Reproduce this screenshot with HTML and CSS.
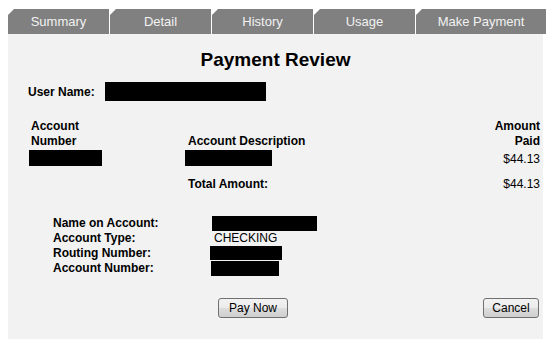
FILE: index.html
```html
<!DOCTYPE html>
<html lang="en">
<head>
    <meta charset="UTF-8">
    <title>Payment Review</title>
    <link rel="stylesheet" href="styles.css">
</head>
<body>
    <div class="page">
        <div class="tabs">
            <div class="tab">Summary</div>
            <div class="tab">Detail</div>
            <div class="tab">History</div>
            <div class="tab">Usage</div>
            <div class="tab tab-wide">Make Payment</div>
        </div>

        <div class="panel">
            <h1 class="title">Payment Review</h1>

            <div class="user-row">
                <span class="label">User Name:</span>
                <span class="redact redact-user"></span>
            </div>

            <div class="accounts">
                <div class="col-num label">Account<br>Number</div>
                <div class="col-desc label head-desc">Account Description</div>
                <div class="col-amt label">Amount<br>Paid</div>

                <div class="col-num"><span class="redact redact-num"></span></div>
                <div class="col-desc"><span class="redact redact-desc"></span></div>
                <div class="col-amt amt-cell">$44.13</div>

                <div class="col-num"></div>
                <div class="col-desc label total">Total Amount:</div>
                <div class="col-amt total">$44.13</div>
            </div>

            <div class="details">
                <span class="label">Name on Account:</span>
                <span><span class="redact redact-name"></span></span>
                <span class="label">Account Type:</span>
                <span class="value-type">CHECKING</span>
                <span class="label">Routing Number:</span>
                <span><span class="redact redact-routing"></span></span>
                <span class="label">Account Number:</span>
                <span><span class="redact redact-acct"></span></span>
            </div>

            <div class="actions">
                <button class="btn btn-pay">Pay Now</button>
                <button class="btn btn-cancel">Cancel</button>
            </div>
        </div>
    </div>
</body>
</html>
```

FILE: styles.css
```css
body {
    margin: 0;
    background: #fff;
    font-family: "Liberation Sans", Arial, sans-serif;
    font-size: 12px;
    color: #000;
}
.page {
    padding: 9px 0 0 8px;
}
.tabs {
    display: flex;
    gap: 1px;
    height: 25px;
}
.tab {
    width: 101px;
    box-sizing: border-box;
    padding-top: 1px;
    background: #808080;
    color: #f2f2f2;
    font-size: 13px;
    line-height: 24px;
    text-align: center;
    clip-path: polygon(6px 0, 100% 0, 100% 100%, 0 100%, 0 6px);
}
.tab-wide {
    width: 130px;
}
.panel {
    width: 535px;
    height: 305px;
    background: #f2f2f2;
    box-sizing: border-box;
    padding-top: 15px;
}
.title {
    margin: 0;
    font-size: 19px;
    line-height: 22px;
    text-align: center;
}
.label {
    font-weight: bold;
}
.redact {
    display: inline-block;
    background: #000;
    vertical-align: top;
}
.user-row {
    display: flex;
    align-items: center;
    gap: 10px;
    margin: 11px 0 0 20px;
}
.redact-user {
    width: 161px;
    height: 19px;
}
.accounts {
    display: grid;
    grid-template-columns: 156px 1fr auto;
    margin-top: 18px;
    padding: 0 3px 0 21px;
    line-height: 15px;
}
.col-num {
    padding-left: 2px;
}
.head-desc {
    align-self: end;
    padding-left: 3px;
}
.col-amt {
    text-align: right;
}
.redact-num {
    width: 73px;
    height: 16px;
    margin: 1px 0 0 -2px;
}
.redact-desc {
    width: 87px;
    height: 16px;
    margin-top: 1px;
}
.amt-cell {
    padding-top: 3px;
}
.total {
    margin-top: 10px;
}
.total.label {
    padding-left: 3px;
}
.details {
    display: grid;
    grid-template-columns: 159px auto;
    margin: 24px 0 0 45px;
    line-height: 15px;
}
.redact-name {
    width: 105px;
    height: 15px;
}
.redact-routing {
    width: 72px;
    height: 14px;
    margin-left: -2px;
}
.redact-acct {
    width: 68px;
    height: 15px;
    margin-left: -1px;
}
.value-type {
    padding-left: 2px;
}
.actions {
    display: flex;
    margin-top: 22px;
    padding: 0 4px 0 210px;
    justify-content: space-between;
}
.btn {
    height: 20px;
    padding: 0;
    border: 1px solid #707070;
    border-radius: 3px;
    background: linear-gradient(#f2f2f2, #ebebeb 50%, #dddddd 50%, #cfcfcf);
    font-family: "Liberation Sans", Arial, sans-serif;
    font-size: 12px;
    color: #000;
}
.btn-pay {
    width: 70px;
}
.btn-cancel {
    width: 56px;
}
```
